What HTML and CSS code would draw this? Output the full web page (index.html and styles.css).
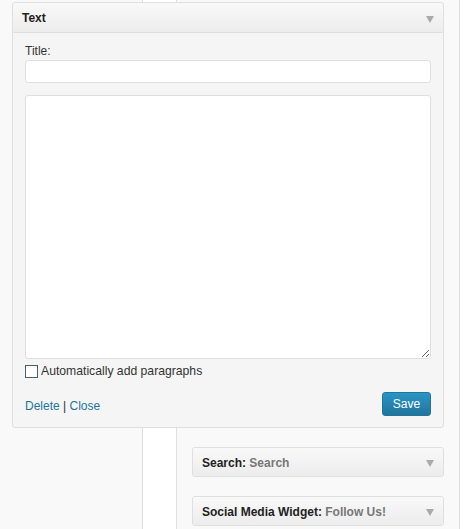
FILE: index.html
```html
<!DOCTYPE html>
<html lang="en">
<head>
    <meta charset="UTF-8">
    <title>Widgets</title>
    <link rel="stylesheet" href="styles.css">
</head>
<body>
    <div class="widget open">
        <div class="widget-top">
            <h4>Text</h4>
            <span class="toggle"></span>
        </div>
        <div class="widget-inside">
            <label class="field-label" for="title">Title:</label>
            <input class="text-input" id="title" type="text">
            <textarea class="text-area"></textarea>
            <label class="check-row">
                <span class="checkbox"></span>
                Automatically add paragraphs
            </label>
            <div class="widget-control">
                <div class="links">
                    <a href="#">Delete</a> | <a href="#">Close</a>
                </div>
                <button class="button-primary">Save</button>
            </div>
        </div>
    </div>

    <div class="sidebar">
        <div class="widget small">
            <div class="widget-top">
                <h4>Search: <span class="in-title">Search</span></h4>
                <span class="toggle"></span>
            </div>
        </div>
        <div class="widget small">
            <div class="widget-top">
                <h4>Social Media Widget: <span class="in-title">Follow Us!</span></h4>
                <span class="toggle"></span>
            </div>
        </div>
    </div>
</body>
</html>
```

FILE: styles.css
```css
* {
    margin: 0;
    padding: 0;
    box-sizing: border-box;
}

body {
    font-family: 'Liberation Sans', Arial, sans-serif;
    font-size: 12px;
    color: #333;
    height: 529px;
    overflow: hidden;
    background:
        linear-gradient(#dfdfdf, #dfdfdf) 142px 0 / 1px 100% no-repeat,
        linear-gradient(#dfdfdf, #dfdfdf) 176px 0 / 1px 100% no-repeat,
        linear-gradient(#dfdfdf, #dfdfdf) 459px 0 / 1px 100% no-repeat,
        linear-gradient(#fff, #fff) 143px 0 / 33px 100% no-repeat,
        linear-gradient(#fff, #fff) 460px 0 / 11px 100% no-repeat,
        #f9f9f9;
    padding-top: 2px;
}

.widget {
    border: 1px solid #dfdfdf;
    border-radius: 3px;
    background: #f5f5f5;
    box-shadow: 0 1px 0 #fff inset;
}

.widget.open {
    margin-left: 12px;
    width: 432px;
}

.widget-top {
    height: 29px;
    display: flex;
    align-items: center;
    justify-content: space-between;
    padding: 0 9px 0 9px;
    background: linear-gradient(to bottom, #f9f9f9, #ececec);
    border-radius: 3px;
}

.open .widget-top {
    border-bottom: 1px solid #dfdfdf;
    border-radius: 3px 3px 0 0;
    height: 30px;
}

.widget-top h4 {
    font-size: 12px;
    font-weight: bold;
    color: #222;
    padding-top: 1px;
}

.in-title {
    color: #777;
}

.toggle {
    width: 0;
    height: 0;
    border-left: 4px solid transparent;
    border-right: 4px solid transparent;
    border-top: 7px solid #aaa;
    margin-top: 3px;
}

.widget-inside {
    padding: 11px 12px 11px 12px;
}

.field-label {
    display: block;
    line-height: 15px;
    margin-bottom: 1px;
}

.text-input {
    display: block;
    width: 100%;
    height: 23px;
    border: 1px solid #dfdfdf;
    border-radius: 3px;
    background: #fff;
    margin-bottom: 12px;
}

.text-area {
    display: block;
    width: 100%;
    height: 264px;
    border: 1px solid #dfdfdf;
    border-radius: 3px;
    background: #fff;
    resize: vertical;
}

.check-row {
    display: flex;
    align-items: center;
    gap: 3px;
    margin-top: 5px;
    line-height: 15px;
    font-size: 12.2px;
}

.checkbox {
    width: 13px;
    height: 13px;
    border: 1px solid #4b5d6d;
    background: #fff;
    display: inline-block;
}

.widget-control {
    display: flex;
    justify-content: space-between;
    align-items: center;
    margin-top: 13px;
}

.links {
    color: #333;
    padding-top: 3px;
}

.links a {
    color: #21759b;
    text-decoration: none;
}

.button-primary {
    font-family: 'Liberation Sans', Arial, sans-serif;
    font-size: 12px;
    color: #fff;
    width: 49px;
    height: 24px;
    border: 1px solid #21759b;
    border-radius: 3px;
    background: linear-gradient(to bottom, #2a95c5, #21759b);
}

.sidebar {
    margin-left: 192px;
    width: 252px;
    padding-top: 19px;
    display: flex;
    flex-direction: column;
    gap: 19px;
}

.widget.small .widget-top {
    height: 28px;
}
```
